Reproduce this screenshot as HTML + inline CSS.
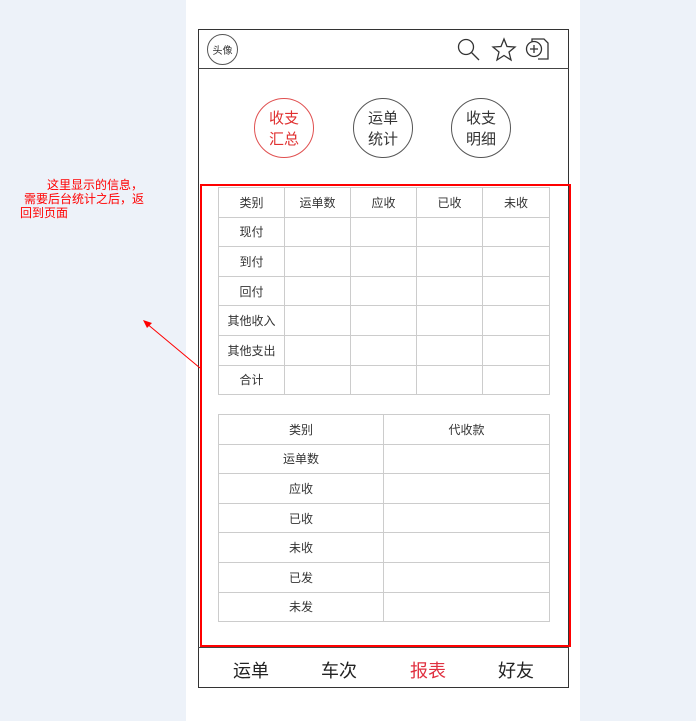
<!DOCTYPE html>
<html><head><meta charset="utf-8"><style>
*{margin:0;padding:0;box-sizing:border-box}
body{width:696px;height:721px;background:#edf2f9;position:relative;overflow:hidden;font-family:"Liberation Sans","Noto Sans CJK SC",sans-serif}
.abs{position:absolute}
.panel{left:186px;top:0;width:394px;height:721px;background:#fff}
.phone{left:198px;top:29px;width:371px;height:659px;border:1px solid #333}
.hdr{left:198px;top:68px;width:371px;border-top:1px solid #444}
.circ{width:60px;height:60px;border:1.5px solid #555;border-radius:50%;text-align:center;font-size:15px;line-height:21px;padding-top:9px;color:#333}
table{border-collapse:collapse;position:absolute;font-size:12px;color:#333;table-layout:fixed}
td{border:1px solid #ccc;text-align:center;height:29.6px}
.nav{font-size:18px;color:#222;top:657px}
.note{color:#f00;font-size:12px;line-height:14px}
</style></head><body>
<div class="abs panel"></div>
<div class="abs phone"></div>
<div class="abs hdr"></div>
<div class="abs" style="left:207px;top:34px;width:31px;height:31px;border:1.5px solid #555;border-radius:50%;font-size:10px;display:flex;align-items:center;justify-content:center;color:#333">头像</div>
<svg class="abs" style="left:455px;top:36px" width="100" height="28" viewBox="0 0 100 28">
<circle cx="11" cy="11" r="7.5" fill="none" stroke="#333" stroke-width="1.3"/><line x1="16.5" y1="16.5" x2="24" y2="24" stroke="#333" stroke-width="1.3"/>
<path d="M49 3 L52 10.5 L60 11 L54 16 L56 24 L49 19.5 L42 24 L44 16 L38 11 L46 10.5 Z" fill="none" stroke="#333" stroke-width="1.3"/>
<path d="M77 6 L77 3 L89 3 L93 7 L93 23 L83 23" fill="none" stroke="#333" stroke-width="1.3"/>
<circle cx="79" cy="13" r="7.5" fill="#fff" stroke="#333" stroke-width="1.3"/><path d="M75 13h8M79 9v8" stroke="#333" stroke-width="1.3"/>
</svg>
<div class="abs circ" style="left:254px;top:98px;border-color:#e05050;color:#e03030">收支<br>汇总</div>
<div class="abs circ" style="left:353px;top:98px">运单<br>统计</div>
<div class="abs circ" style="left:451px;top:98px">收支<br>明细</div>
<div class="abs" style="left:200px;top:184px;width:371px;height:463px;border:2px solid #f00"></div>
<table style="left:218px;top:187px;width:331px">
<colgroup><col style="width:66px"><col style="width:66px"><col style="width:66px"><col style="width:66px"><col style="width:67px"></colgroup>
<tr><td>类别</td><td>运单数</td><td>应收</td><td>已收</td><td>未收</td></tr>
<tr><td>现付</td><td></td><td></td><td></td><td></td></tr>
<tr><td>到付</td><td></td><td></td><td></td><td></td></tr>
<tr><td>回付</td><td></td><td></td><td></td><td></td></tr>
<tr><td>其他收入</td><td></td><td></td><td></td><td></td></tr>
<tr><td>其他支出</td><td></td><td></td><td></td><td></td></tr>
<tr><td>合计</td><td></td><td></td><td></td><td></td></tr>
</table>
<table style="left:218px;top:414px;width:331px">
<colgroup><col style="width:165px"><col style="width:166px"></colgroup>
<tr><td>类别</td><td>代收款</td></tr>
<tr><td>运单数</td><td></td></tr>
<tr><td>应收</td><td></td></tr>
<tr><td>已收</td><td></td></tr>
<tr><td>未收</td><td></td></tr>
<tr><td>已发</td><td></td></tr>
<tr><td>未发</td><td></td></tr>
</table>
<div class="abs" style="left:198px;top:647px;width:371px;border-top:1px solid #444"></div>
<div class="abs nav" style="left:233px">运单</div>
<div class="abs nav" style="left:321px">车次</div>
<div class="abs nav" style="left:410px;color:#e03040">报表</div>
<div class="abs nav" style="left:498px">好友</div>
<div class="abs note" style="left:47px;top:178px">这里显示的信息，</div>
<div class="abs note" style="left:24px;top:192px">需要后台统计之后，返</div>
<div class="abs note" style="left:20px;top:206px">回到页面</div>
<svg class="abs" style="left:0;top:0" width="696" height="721"><line x1="200" y1="368" x2="146" y2="323" stroke="#f00" stroke-width="1"/><path d="M143 320 L152 323 L147 328 Z" fill="#f00"/></svg>
</body></html>
